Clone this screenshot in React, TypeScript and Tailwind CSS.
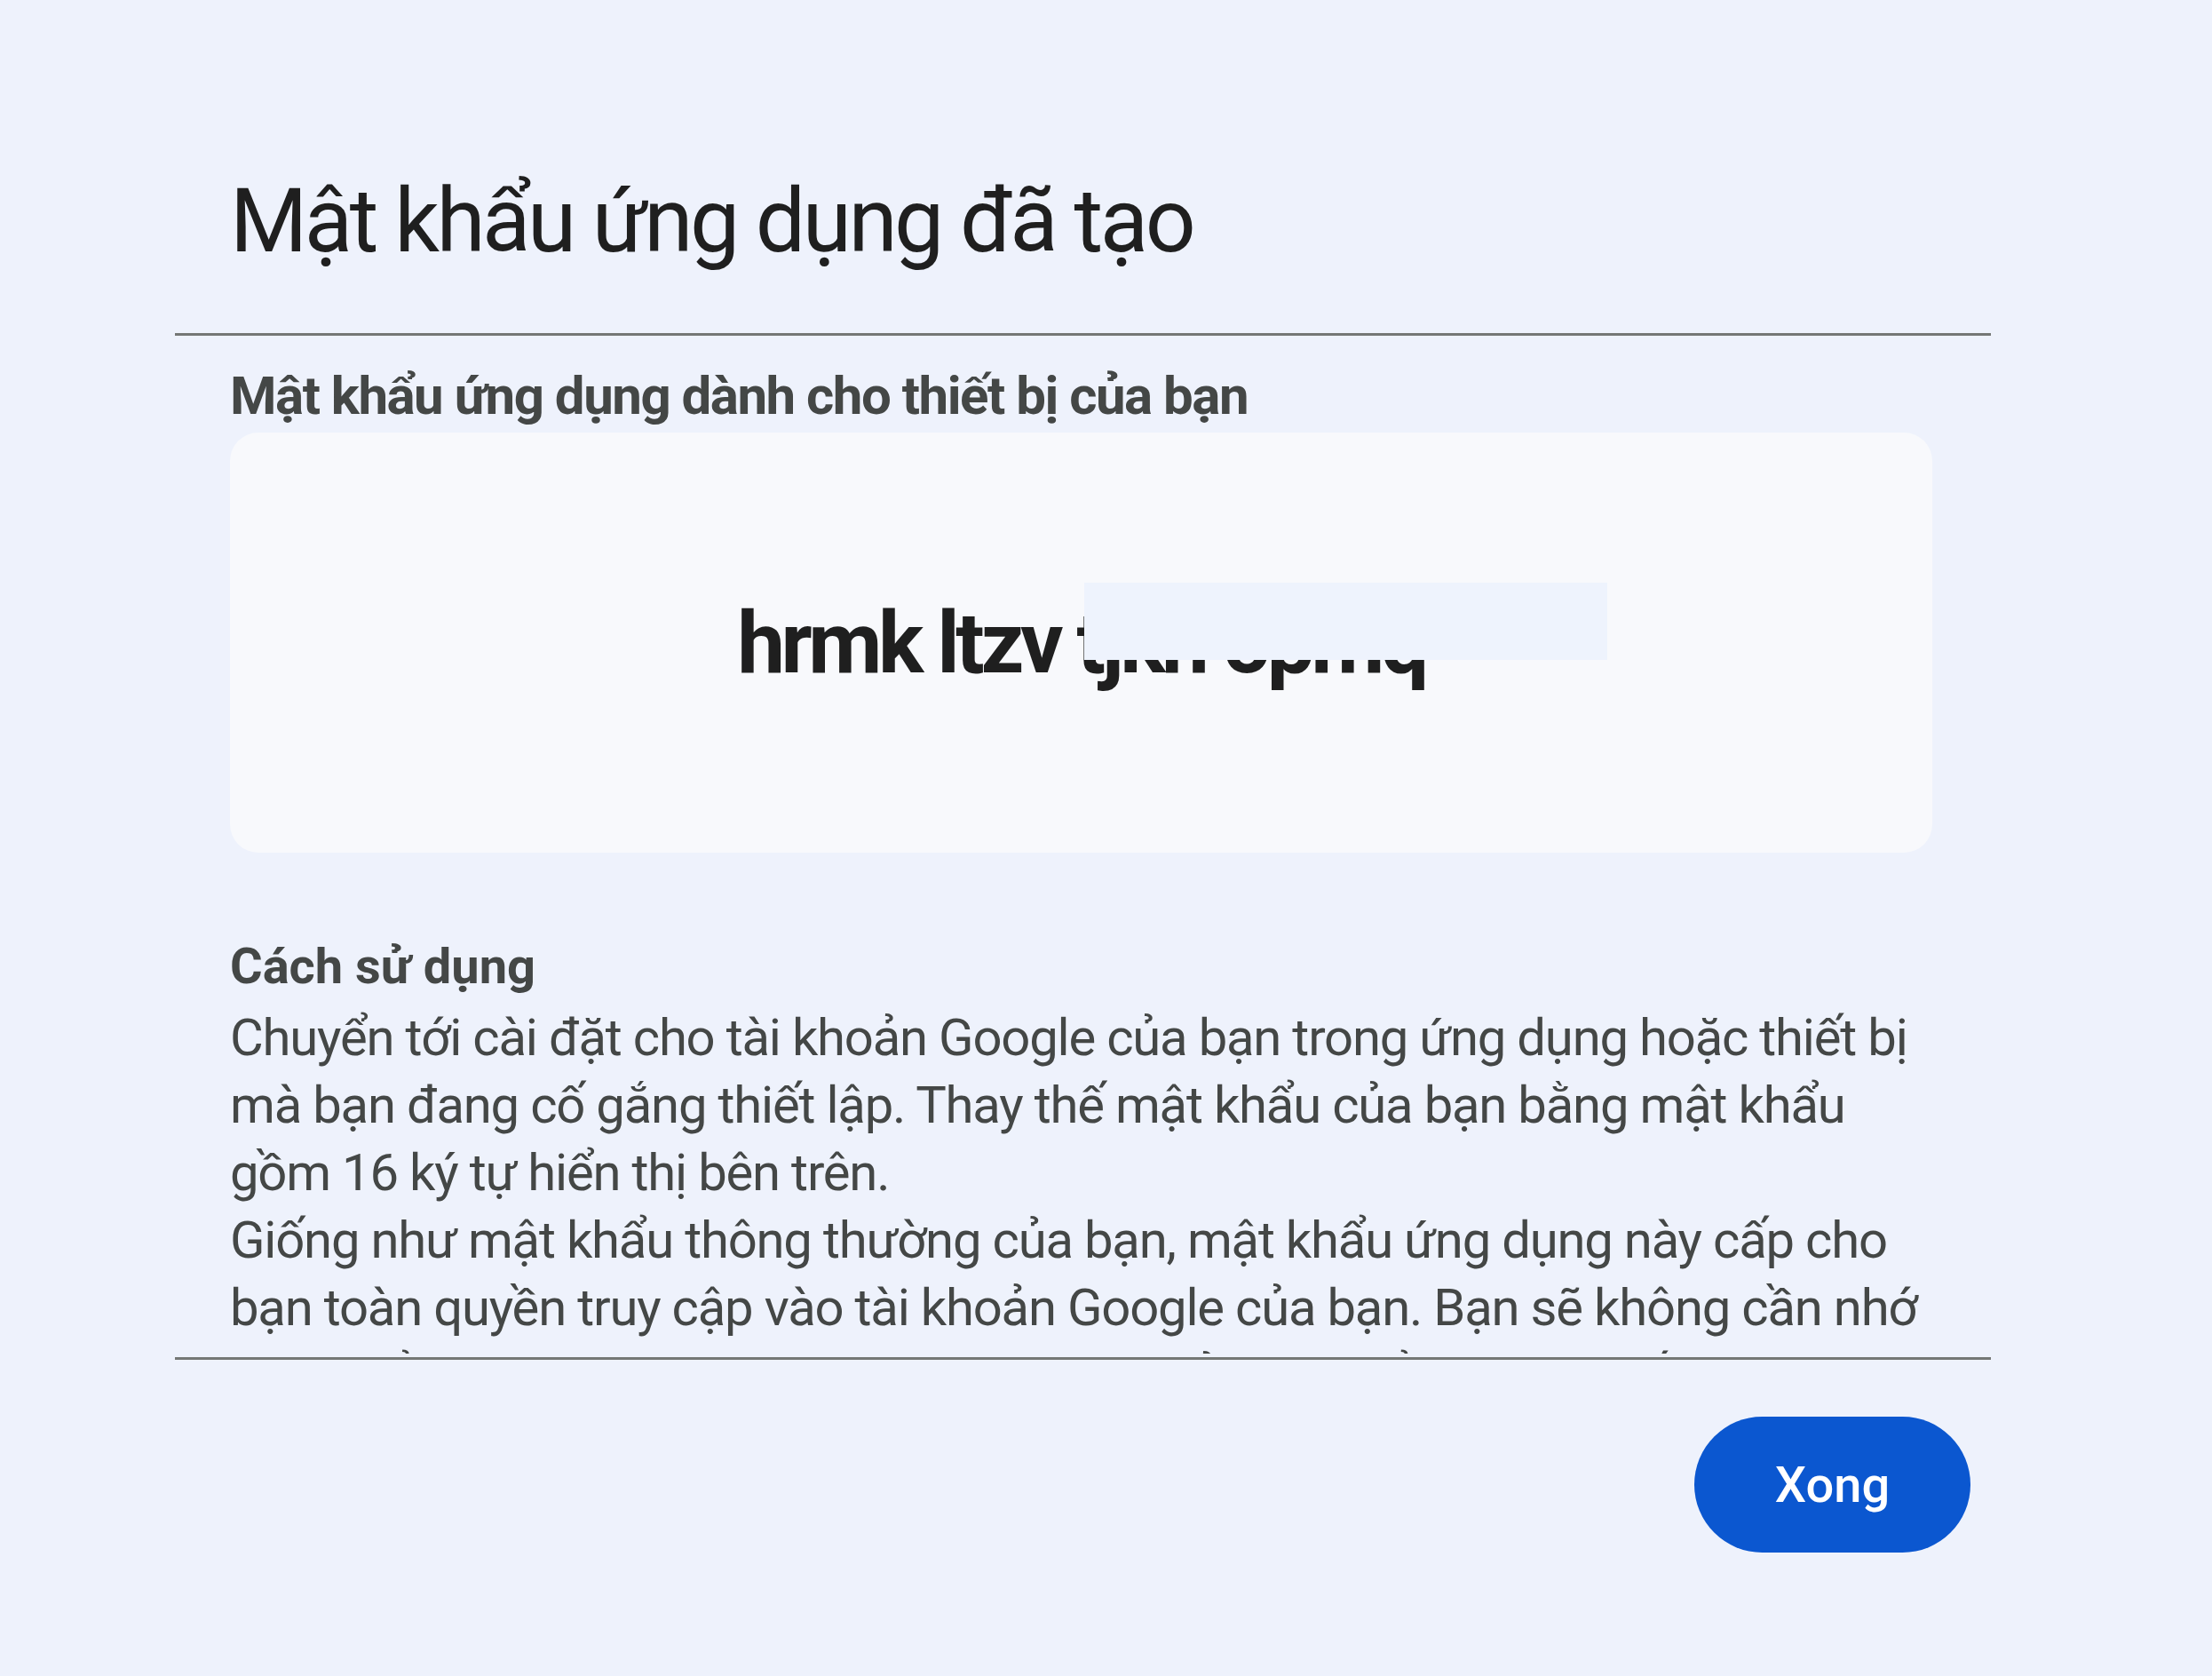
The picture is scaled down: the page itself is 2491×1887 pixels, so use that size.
export default function App() {
  const p1 = [
    'Chuyển tới cài đặt cho tài khoản Google của bạn trong ứng dụng hoặc thiết bị',
    'mà bạn đang cố gắng thiết lập. Thay thế mật khẩu của bạn bằng mật khẩu',
    'gồm 16 ký tự hiển thị bên trên.',
  ];
  const p2 = [
    'Giống như mật khẩu thông thường của bạn, mật khẩu ứng dụng này cấp cho',
    'bạn toàn quyền truy cập vào tài khoản Google của bạn. Bạn sẽ không cần nhớ',
    'mật khẩu này, vì vậy đừng ghi lại hoặc chia sẻ mật khẩu này với bất kỳ ai.',
  ];

  return (
    <div className="w-[2491px] h-[1887px] bg-[#eef2fc] font-['Roboto',sans-serif] overflow-hidden">
      <div className="ml-[197px] w-[2045px] flex flex-col">
        {/* Title */}
        <div className="h-[375px] pl-[62px] pt-[189px]">
          <h1 className="text-[100px] leading-[120px] text-[#1f1f1f] font-normal tracking-[-3.5px] whitespace-nowrap">
            Mật khẩu ứng dụng đã tạo
          </h1>
        </div>
        <div className="h-[3px] bg-[#747775]" />

        {/* Scrollable content */}
        <div className="h-[1146px] mb-[4px] overflow-hidden pl-[62px] pr-[66px] pt-[28px]">
          <h2 className="text-[60px] leading-[80px] font-bold text-[#444746] tracking-[-1.5px] whitespace-nowrap">
            Mật khẩu ứng dụng dành cho thiết bị của bạn
          </h2>
          <div className="mt-[1px] h-[473px] rounded-[32px] bg-[#f8f9fc] flex items-center justify-center">
            <div className="relative">
              <span className="text-[96px] leading-[110px] font-bold text-[#1f1f1f] whitespace-nowrap tracking-[-4.4px]">
                hrmk ltzv tjkn opmq
              </span>
              <div className="absolute left-[391px] top-[-13px] w-[589px] h-[87px] bg-[#eef3fd]" />
            </div>
          </div>

          <div className="mt-[90px]">
            <h3 className="text-[56px] leading-[76px] font-bold text-[#444746]">Cách sử dụng</h3>
            <div className="mt-[4px] text-[58px] leading-[76px] text-[#444746] tracking-[-1.2px] whitespace-nowrap">
              {p1.map((l) => (
                <div key={l}>{l}</div>
              ))}
              {p2.map((l) => (
                <div key={l}>{l}</div>
              ))}
            </div>
          </div>
        </div>
        <div className="h-[3px] bg-[#747775]" />

        {/* Actions */}
        <div className="flex justify-end pr-[23px] pt-[64px]">
          <button className="w-[311px] h-[153px] rounded-full bg-[#0b57d0] text-white text-[56px] font-medium">
            Xong
          </button>
        </div>
      </div>
    </div>
  );
}
